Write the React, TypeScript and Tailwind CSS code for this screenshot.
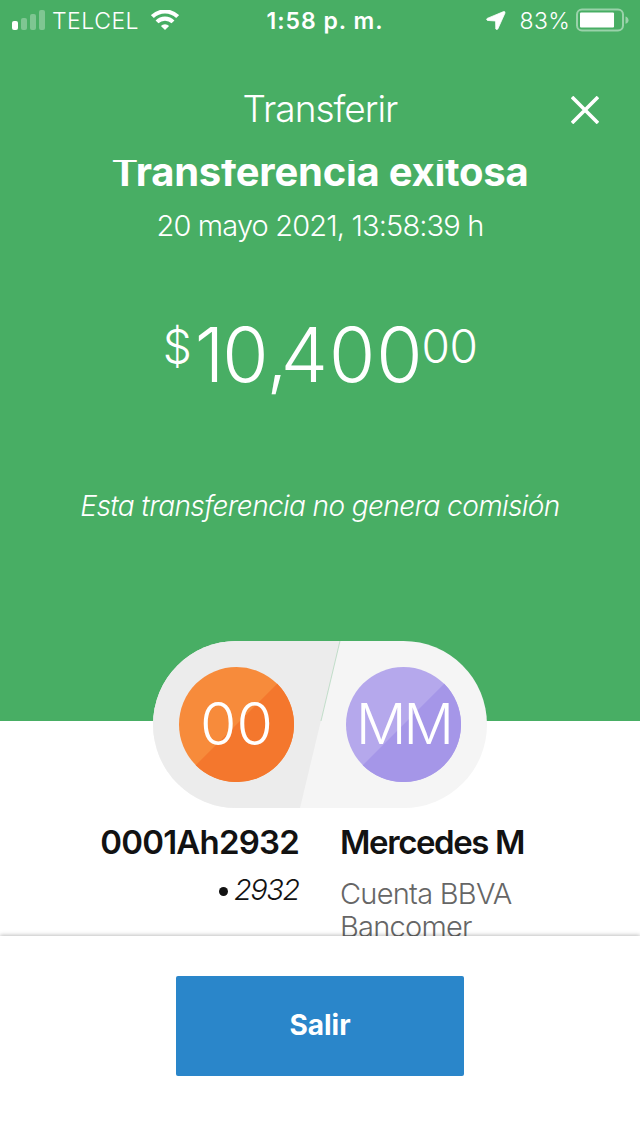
import type { ReactNode } from 'react';

function StatusBar() {
  return (
    <div className="flex h-10 items-center justify-between pl-3 pr-[11px] text-[23px] text-white">
      <div className="flex w-[200px] items-center">
        <svg className="h-5 w-[33px]" viewBox="0 0 33 20" fill="currentColor">
          <rect x="0" y="11" width="6" height="9" rx="2" />
          <rect x="9" y="8" width="6" height="12" rx="2" opacity="0.3" />
          <rect x="18" y="4" width="6" height="16" rx="2" opacity="0.3" />
          <rect x="27" y="0" width="6" height="20" rx="2" opacity="0.3" />
        </svg>
        <span className="mt-0.5 ml-[7px] font-[350] tracking-[0.5px]">TELCEL</span>
        <Wifi />
      </div>
      <span className="mt-0.5 ml-[9px] font-semibold tracking-[1px]">1:58 p. m.</span>
      <div className="flex w-[200px] items-center justify-end">
        <svg className="mr-[14px] h-5 w-5" viewBox="0 0 20 20" fill="currentColor">
          <path d="M17.6 1.6 1.2 8.4q-1.2 1.2.2 2l8.2.6.2 8q.8 1.2 2 0L19 3q.2-1.8-1.4-1.4Z" stroke="currentColor" strokeWidth="0.8" />
        </svg>
        <span className="mt-0.5 font-[350] tracking-[0.3px]">83%</span>
        <Battery level={0.83} />
      </div>
    </div>
  );
}

function Wifi() {
  return (
    <svg className="ml-[12px] h-5 w-7" viewBox="0 0 28 20" fill="none" stroke="currentColor" strokeWidth="4.1">
      <path d="M1.4 6.6a18 18 0 0 1 25.2 0" />
      <path d="M6 11.9a11.4 11.4 0 0 1 16 0" />
      <path d="M14 20 9.9 15.9a5.8 5.8 0 0 1 8.2 0Z" fill="currentColor" stroke="none" />
    </svg>
  );
}

function Battery({ level }: { level: number }) {
  return (
    <svg className="ml-[6px] h-6 w-[53px] shrink-0" viewBox="0 0 53 24">
      <rect x="1" y="1.5" width="46" height="21" rx="5" fill="none" stroke="#fff" strokeOpacity="0.45" strokeWidth="2" />
      <rect x="4" y="4.5" width={41 * level} height="15" rx="1" fill="#fff" />
      <path d="M49.5 8.5q3 1 3 3.7t-3 3.6Z" fill="#fff" fillOpacity="0.45" />
    </svg>
  );
}

function Avatar({ light, dark, children }: { light: string; dark: string; children: ReactNode }) {
  return (
    <div className="relative flex h-[115px] w-[115px] items-center justify-center">
      <svg className="absolute inset-0 h-full w-full" viewBox="0 0 115 115">
        <circle cx="57.5" cy="57.5" r="57.5" fill={light} />
        <path d="M98.2 16.8A57.5 57.5 0 0 1 16.8 98.2Z" fill={dark} />
      </svg>
      {children}
    </div>
  );
}

export default function App() {
  return (
    <div className="flex h-[1136px] w-[640px] flex-col overflow-hidden bg-white font-['Inter','Open_Sans',sans-serif]">
      <header className="h-[160px] shrink-0 bg-[#48ae64] text-white">
        <StatusBar />
        <div className="grid grid-cols-[80px_1fr_80px] items-center pt-11">
          <h1 className="col-start-2 text-center text-[37px] leading-[50px] font-light tracking-[-1px]">Transferir</h1>
          <svg className="mt-0.5 ml-[11px] h-[28px] w-[28px]" viewBox="0 0 28 28" stroke="#fff" strokeWidth="3.6">
            <path d="M1 1 27 27M27 1 1 27" />
          </svg>
        </div>
      </header>

      <main className="h-[776px] shrink-0 overflow-hidden">
        <section className="flex h-[561px] flex-col items-center bg-[#48ae64] whitespace-nowrap text-white">
          <h2 className="-mt-[13px] text-[40px] leading-[50px] font-bold tracking-[-0.25px]">Transferencia exitosa</h2>
          <p className="mt-[9px] text-[29px] leading-10 font-light tracking-[-0.85px]">20 mayo 2021, 13:58:39 h</p>
          <div className="mt-[59px] flex h-[100px] items-start font-light">
            <span className="mt-[11px] text-[46px] leading-[60px]">$</span>
            <span className="ml-[3px] text-[75px] leading-[100px]">
              <span className="tracking-[-2px]">10</span>
              <span className="tracking-[-7px]">,</span>
              <span className="tracking-[1px]">400</span>
            </span>
            <span className="-ml-[2px] mt-[11px] text-[46px] leading-[60px] tracking-[-0.5px]">00</span>
          </div>
          <p className="mt-[81px] text-[28px] leading-10 font-light tracking-[-0.6px] italic">
            Esta transferencia no genera comisión
          </p>
        </section>

        {/* origin and destination */}
        <div className="relative mx-auto -mt-[80px] flex h-[167px] w-[334px] items-center justify-between overflow-hidden rounded-full bg-[#f5f5f5] px-[26px] text-white">
          <svg className="absolute inset-0 h-full w-full" viewBox="0 0 334 167">
            <path d="M0 0H187L147 167H0Z" fill="#ececec" />
            <path d="M187 0 168 80" stroke="#48ae64" strokeWidth="0.4" strokeOpacity="0.7" />
          </svg>
          <Avatar light="#f78b3b" dark="#f4772d">
            <span className="relative -mt-0.5 text-[59px] leading-[80px] font-light">00</span>
          </Avatar>
          <Avatar light="#b5a8ec" dark="#a596e8">
            <span className="relative -mt-0.5 text-[56px] leading-[80px] font-light tracking-[-3px]">MM</span>
          </Avatar>
        </div>

        <div className="mt-[11px] grid grid-cols-[299px_1fr] gap-x-[41px] whitespace-nowrap text-[#121212]">
          <div className="flex flex-col items-end">
            <p className="text-[33px] leading-[46px] font-semibold tracking-[-0.8px]">0001Ah2932</p>
            <p className="mt-[8px] flex items-center gap-[6px] text-[29px] leading-[34px] font-light tracking-[-1.4px] italic">
              <span className="mt-[2px] h-[9px] w-[9px] rounded-full bg-[#121212]" />
              2932
            </p>
          </div>
          <div>
            <p className="text-[33px] leading-[46px] font-semibold tracking-[-1.4px]">Mercedes M</p>
            <p className="mt-[12px] text-[29px] leading-[33px] font-light tracking-[-0.75px] text-[#666]">
              Cuenta BBVA
              <br />
              Bancomer
            </p>
          </div>
        </div>
      </main>

      <footer className="relative flex h-[200px] shrink-0 justify-center bg-white pt-10 shadow-[0_-1px_4px_rgba(0,0,0,0.25)]">
        <button className="h-[100px] w-[288px] rounded-[2px] bg-[#2a86ca] pb-0.5 text-[28px] font-bold text-white">Salir</button>
      </footer>
    </div>
  );
}
